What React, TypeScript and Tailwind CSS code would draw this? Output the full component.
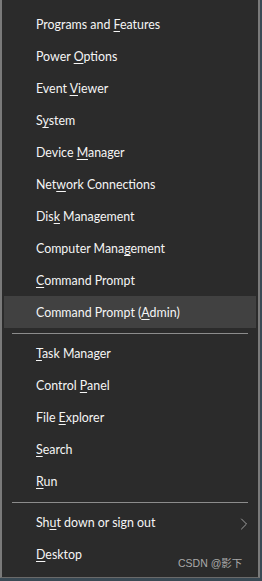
import { ChevronRight } from 'lucide-react'

type Item = { pre: string; key: string; post: string; active?: boolean; sub?: boolean }

const groups: Item[][] = [
  [
    { pre: 'Programs and ', key: 'F', post: 'eatures' },
    { pre: 'Power ', key: 'O', post: 'ptions' },
    { pre: 'Event ', key: 'V', post: 'iewer' },
    { pre: 'S', key: 'y', post: 'stem' },
    { pre: 'Device ', key: 'M', post: 'anager' },
    { pre: 'Net', key: 'w', post: 'ork Connections' },
    { pre: 'Dis', key: 'k', post: ' Management' },
    { pre: 'Computer Mana', key: 'g', post: 'ement' },
    { pre: '', key: 'C', post: 'ommand Prompt' },
    { pre: 'Command Prompt (', key: 'A', post: 'dmin)', active: true },
  ],
  [
    { pre: '', key: 'T', post: 'ask Manager' },
    { pre: 'Control ', key: 'P', post: 'anel' },
    { pre: 'File ', key: 'E', post: 'xplorer' },
    { pre: '', key: 'S', post: 'earch' },
    { pre: '', key: 'R', post: 'un' },
  ],
  [
    { pre: 'Sh', key: 'u', post: 't down or sign out', sub: true },
    { pre: '', key: 'D', post: 'esktop' },
  ],
]

function MenuRow({ item }: { item: Item }) {
  return (
    <div
      className={
        'flex h-[32px] items-center justify-between pl-[32px] pr-[2px] pt-[3px] ' +
        (item.active ? 'bg-[#414141]' : '')
      }
    >
      <span className="text-[12.4px] leading-none text-[#f5f5f5]">
        {item.pre}
        <span className="underline underline-offset-[2px]">{item.key}</span>
        {item.post}
      </span>
      {item.sub && <ChevronRight size={20} strokeWidth={1} className="text-[#b5b5b5]" />}
    </div>
  )
}

export default function App() {
  return (
    <div
      className="relative flex h-[581px] w-[262px] bg-[#3a4a55]"
      style={{ fontFamily: 'Lato, "Noto Sans", "Noto Sans CJK SC", sans-serif' }}
    >
      <div className="flex h-[578px] w-[260px] flex-col border-x-2 border-b border-x-[#7a7a7a] border-b-[#6a6a6a] bg-[#2b2b2b] px-[2px] pt-[8px]">
        {groups.map((g, gi) => (
          <div key={gi}>
            {gi > 0 && <div className="mx-[8px] mb-[3px] mt-[5px] h-px bg-[#8c8c8c]" />}
            {g.map((it, i) => (
              <MenuRow key={i} item={it} />
            ))}
          </div>
        ))}
      </div>
      <span
        className="absolute left-[178px] top-[558px] text-[10.5px] leading-none text-[#a9a9a9]"
        style={{ fontFamily: '"Liberation Sans", "Noto Sans CJK SC", sans-serif' }}
      >
        CSDN @影下
      </span>
    </div>
  )
}
